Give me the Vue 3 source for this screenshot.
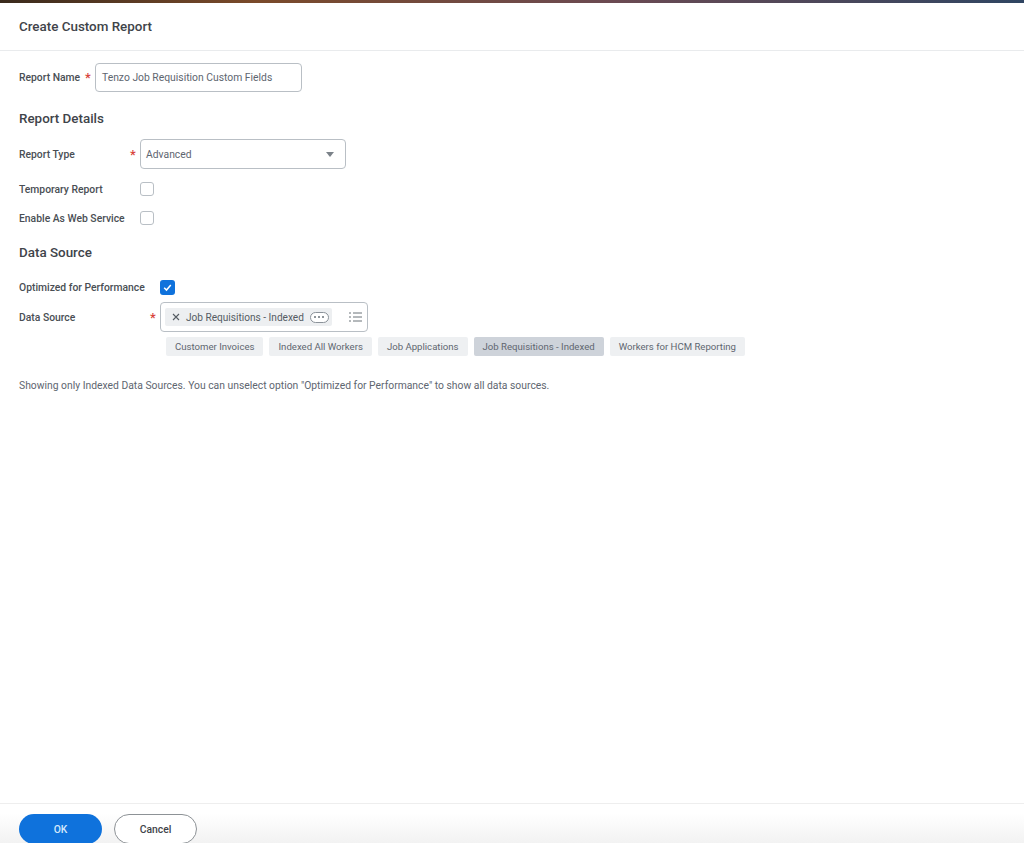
<template>
  <div class="page">
    <div class="topbar"></div>
    <header class="head">
      <h1>Create Custom Report</h1>
    </header>

    <main class="body">
      <div class="row name-row">
        <label>Report Name</label>
        <span class="req">*</span>
        <div class="input name-input">Tenzo Job Requisition Custom Fields</div>
      </div>

      <h2 class="details-title">Report Details</h2>
      <div class="row type-row">
        <label>Report Type</label>
        <span class="req">*</span>
        <div class="input type-input">
          <span>Advanced</span>
          <span class="caret"></span>
        </div>
      </div>
      <div class="row check-row temp-row">
        <label>Temporary Report</label>
        <span class="box"></span>
      </div>
      <div class="row check-row web-row">
        <label>Enable As Web Service</label>
        <span class="box"></span>
      </div>

      <h2 class="source-title">Data Source</h2>
      <div class="row perf-row">
        <label>Optimized for Performance</label>
        <span class="box checked">
          <svg viewBox="0 0 15 15" width="15" height="15">
            <path d="M4.2 7.8l2.3 2.3 4.3-5" fill="none" stroke="#fff" stroke-width="1.5" />
          </svg>
        </span>
      </div>
      <div class="row source-row">
        <label>Data Source</label>
        <span class="req">*</span>
        <div class="input source-input">
          <div class="pill">
            <svg class="pill-x" viewBox="0 0 8 8" width="8" height="8">
              <path d="M1 1l6 6M7 1L1 7" stroke="#555c63" stroke-width="1.1" />
            </svg>
            <span class="pill-text">Job Requisitions - Indexed</span>
            <span class="more"><i></i><i></i><i></i></span>
          </div>
          <svg class="list-icon" viewBox="0 0 13 10" width="13" height="10">
            <path d="M0 1h2M4 1h9M0 5h2M4 5h9M0 9h2M4 9h9" stroke="#6a7279" stroke-width="1" />
          </svg>
        </div>
      </div>

      <div class="chips">
        <span v-for="c in chips" :key="c" :class="['chip', { on: c === selected }]">{{ c }}</span>
      </div>

      <p class="note">Showing only Indexed Data Sources. You can unselect option "Optimized for Performance" to show all data sources.</p>
    </main>

    <footer class="foot">
      <button class="btn ok">OK</button>
      <button class="btn cancel">Cancel</button>
    </footer>
  </div>
</template>

<script setup>
const chips = [
  'Customer Invoices',
  'Indexed All Workers',
  'Job Applications',
  'Job Requisitions - Indexed',
  'Workers for HCM Reporting'
]
const selected = 'Job Requisitions - Indexed'
</script>

<style>
html, body { margin: 0; background: #fff; overflow: hidden; }
</style>

<style scoped>
.page {
  height: 843px;
  display: flex;
  flex-direction: column;
  overflow: hidden;
  font-family: Roboto, "Liberation Sans", sans-serif;
  font-size: 10.35px;
  color: #5e6670;
  background: #fff;
}

.topbar {
  height: 3px;
  flex: none;
  background: linear-gradient(to right, #3a2a1c, #7a4a2a 25%, #6b4a52 60%, #2f4562);
}

.head {
  height: 48px;
  flex: none;
  box-sizing: border-box;
  padding-left: 19px;
  display: flex;
  align-items: center;
  border-bottom: 1px solid #e9ebed;
}
.head h1 {
  margin: 0;
  font-size: 13.4px;
  font-weight: 500;
  color: #3f444a;
}

.body {
  flex: 1;
  padding: 12px 19px 0;
}

.row { display: flex; align-items: center; }

label {
  flex: none;
  white-space: nowrap;
  font-weight: 500;
  color: #494e54;
}

.req {
  flex: none;
  color: #d8433b;
  font-size: 13px;
  font-weight: 500;
  width: 10px;
  margin-left: 4px;
  line-height: 1;
}
.name-row label { width: 62px; }
.type-row label { width: 107px; }
.check-row label { width: 121px; }
.perf-row label { width: 141px; }
.source-row label { width: 127px; }

.input {
  box-sizing: border-box;
  height: 30px;
  border: 1px solid #b9bfc5;
  border-radius: 4px;
  background: #fff;
  display: flex;
  align-items: center;
  color: #5e6670;
}
.name-input {
  width: 207px;
  height: 29px;
  padding-left: 6px;
}
.type-input {
  width: 206px;
  padding: 0 11px 0 5px;
  justify-content: space-between;
}
.caret {
  width: 0;
  height: 0;
  border-left: 4px solid transparent;
  border-right: 4px solid transparent;
  border-top: 5px solid #7b8289;
}

h2 {
  margin: 0;
  font-size: 13.4px;
  font-weight: 500;
  color: #3f444a;
}
.details-title { margin-top: 19px; }
.type-row { margin-top: 13px; }

.box {
  box-sizing: border-box;
  width: 14px;
  height: 14px;
  flex: none;
  border: 1px solid #b9bfc5;
  border-radius: 3px;
  background: #fff;
}
.box.checked {
  width: 15px;
  height: 15px;
  border: none;
  background: #0f72dc;
}
.box.checked svg { display: block; }

.temp-row { margin-top: 13px; }
.web-row { margin-top: 15px; }

.source-title { margin-top: 20px; }
.perf-row { margin-top: 20px; }
.source-row { margin-top: 7px; }

.source-input {
  width: 208px;
  padding: 0 5px 0 4px;
  justify-content: space-between;
}
.pill {
  display: flex;
  align-items: center;
  height: 18px;
  width: 167px;
  box-sizing: border-box;
  background: #edeff1;
  border-radius: 2px;
  padding-left: 7px;
  color: #555c63;
}
.pill-x { flex: none; margin-right: 6px; }
.pill-text { white-space: nowrap; font-size: 10.1px; }
.more {
  flex: none;
  margin-left: 6px;
  width: 19px;
  height: 11px;
  box-sizing: border-box;
  border: 1px solid #8b9299;
  border-radius: 6px;
  display: flex;
  align-items: center;
  justify-content: center;
  gap: 2px;
  background: #fff;
}
.more i {
  width: 2px;
  height: 2px;
  border-radius: 50%;
  background: #6a7279;
}

.chips {
  display: flex;
  gap: 6px;
  margin: 5px 0 0 147px;
}
.chip {
  height: 19px;
  padding: 0 9px;
  display: flex;
  align-items: center;
  white-space: nowrap;
  border-radius: 2px;
  background: #eef0f2;
  color: #5e6670;
  font-size: 9.6px;
}
.chip.on { background: #ced3da; }

.note {
  margin: 23px 0 0;
  color: #5e6670;
}

.foot {
  height: 40px;
  flex: none;
  box-sizing: border-box;
  border-top: 1.5px solid #eeeeee;
  padding: 10px 0 0 19px;
  display: flex;
  align-items: flex-start;
  gap: 12px;
  overflow: hidden;
  background: linear-gradient(to bottom, #fff 25%, #f2f2f2);
}
.btn {
  width: 83px;
  height: 30px;
  flex: none;
  border-radius: 15px;
  font-family: inherit;
  font-size: 10.35px;
  font-weight: 500;
  padding: 0;
}
.ok {
  background: #0f72dc;
  color: #d5e8fb;
  border: none;
}
.cancel {
  background: #fff;
  color: #3f444a;
  border: 1px solid #8d9296;
}
</style>
